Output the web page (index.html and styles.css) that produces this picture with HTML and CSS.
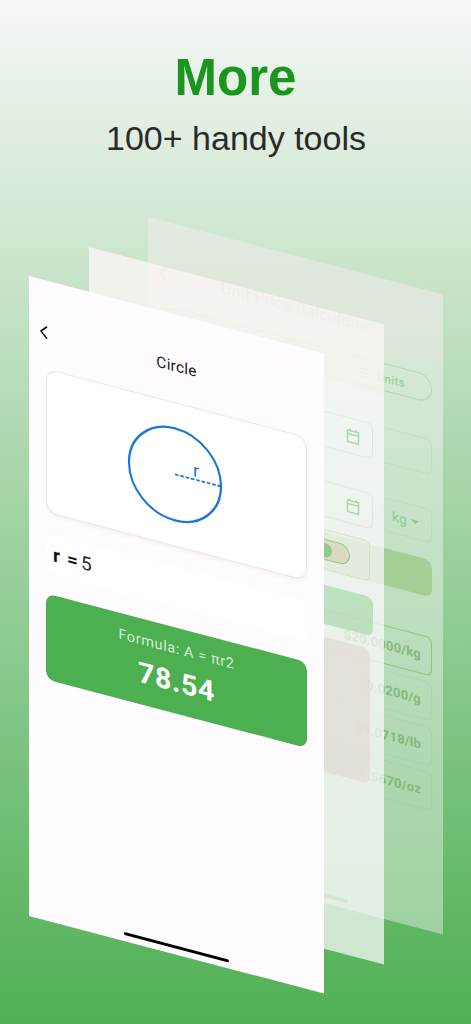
FILE: index.html
```html
<!DOCTYPE html>
<html lang="en">
<head>
<meta charset="utf-8">
<title>More - 100+ handy tools</title>
<link rel="stylesheet" href="styles.css">
</head>
<body>
<header class="hero">
  <h1 class="hero-title">More</h1>
  <p class="hero-sub">100+ handy tools</p>
</header>

<section class="sheet sheet-back">
  <div class="bar bar-tint bar-tint-back">
    <svg class="chev" viewBox="0 0 10 14"><path d="M8 1 2 7l6 6"/></svg>
    <span class="bar-title">Unit Price Calculator</span>
  </div>
  <div class="back-body">
    <div class="seg">
      <div class="seg-item seg-on"></div>
      <div class="seg-item"></div>
      <div class="seg-item seg-units">
        <svg class="list-ic" viewBox="0 0 12 12"><path d="M1 2h1M4 2h7M1 6h1M4 6h7M1 10h1M4 10h7"/></svg>
        <span class="units-label">Units</span>
      </div>
    </div>
    <div class="back-line back-line-a"><div class="b-field b-field-a"></div></div>
    <div class="back-line back-line-b"><div class="b-field b-field-b"><span class="kg">kg</span><span class="caret"></span></div></div>
    <div class="back-btn"></div>
    <ul class="results">
      <li class="res res-on">$20.0000/kg</li>
      <li class="res">$0.0200/g</li>
      <li class="res">$9.0718/lb</li>
      <li class="res">$0.5670/oz</li>
    </ul>
  </div>
  <div class="home home-back"></div>
</section>

<section class="sheet sheet-mid">
  <div class="bar bar-tint">
    <svg class="chev chev-mid" viewBox="0 0 10 14"><path d="M8 1 2 7l6 6"/></svg>
  </div>
  <div class="mid-body">
    <div class="m-field m-field-a">
      <svg class="cal" viewBox="0 0 14 16"><path d="M1.5 3h11v11.5h-11zM1.5 6.5h11M4 1v3M10 1v3"/></svg>
    </div>
    <div class="m-field m-field-b">
      <svg class="cal" viewBox="0 0 14 16"><path d="M1.5 3h11v11.5h-11zM1.5 6.5h11M4 1v3M10 1v3"/></svg>
    </div>
    <div class="m-toggle"><span class="pill"><span class="knob"></span></span></div>
    <div class="m-green"></div>
    <div class="m-tan"></div>
  </div>
</section>

<section class="sheet sheet-front">
  <div class="bar">
    <svg class="chev chev-front" viewBox="0 0 10 14"><path d="M8 1 2 7l6 6"/></svg>
    <span class="bar-title bar-title-front">Circle</span>
  </div>
  <div class="shape-card">
    <svg class="circle" viewBox="0 0 96 96">
      <circle cx="48" cy="48" r="46"/>
      <path class="radius" d="M48 48h46"/>
      <text class="r-label" x="66" y="45">r</text>
    </svg>
  </div>
  <div class="input-card">
    <span class="var">r</span><span class="eq">=</span><span class="val">5</span>
  </div>
  <div class="result-card">
    <div class="formula">Formula: A = πr2</div>
    <div class="answer">78.54</div>
  </div>
  <div class="home"></div>
</section>
</body>
</html>
```
FILE: styles.css
```css
* { box-sizing: border-box; margin: 0; padding: 0; }
html, body { height: 1024px; }
body {
  position: relative;
  width: 471px;
  overflow: hidden;
  background: linear-gradient(180deg, #f5f7f5 0%, #4fb054 100%);
  font-family: Roboto, "Liberation Sans", sans-serif;
}
.hero { padding-top: 48px; text-align: center; font-family: "Liberation Sans", Arial, sans-serif; }
.hero-title { font-size: 51px; line-height: 60px; font-weight: 700; color: #1a961e; }
.hero-sub { margin-top: 10px; padding-left: 1px; font-size: 34px; line-height: 40px; color: #2a2a2a; }

.sheet {
  position: absolute;
  width: 295px;
  height: 640px;
  display: flex;
  flex-direction: column;
  transform-origin: 0 0;
  transform: skewY(14.72deg);
}
.sheet-back { left: 148px; top: 217px; background: rgba(255, 251, 255, .4); }
.sheet-mid { left: 89px; top: 246.5px; background: rgba(255, 251, 255, .7); }
.sheet-front { left: 29px; top: 276px; background: #fffbff; }

.bar { position: relative; height: 88px; flex: none; }
.bar-tint { height: 70px; background: rgba(244, 238, 232, .42); }
.bar-tint-back { background: rgba(226, 226, 218, .45); }
.chev { position: absolute; left: 10px; top: 45px; width: 10px; height: 14px; fill: none; stroke: rgba(170, 170, 160, .6); stroke-width: 1.6; }
.chev-front { stroke: #111; }
.chev-mid { stroke: #777; }
.bar-title { position: absolute; left: 0; right: 0; top: 41px; text-align: center; font-size: 16px; line-height: 22px; letter-spacing: .2px; color: rgba(150, 150, 140, .42); }
.bar-title-front { font-size: 15.5px; color: #222; }

/* back sheet */
.back-body { display: flex; flex-direction: column; padding: 14px 11px 0 15px; opacity: .75; }
.seg { display: flex; height: 28px; border: 1px solid rgba(76, 175, 80, .35); border-radius: 14px; overflow: hidden; }
.seg-item { flex: 1; min-width: 0; border-left: 1px solid rgba(76, 175, 80, .3); }
.seg-item:first-child { border-left: 0; }
.seg-on { background: rgba(240, 215, 205, .5); }
.seg-units { display: flex; align-items: center; padding: 2px 0 0 42px; gap: 8px; font-size: 11.5px; letter-spacing: .4px; color: #6fbf73; }
.list-ic { flex: none; width: 12px; height: 12px; fill: none; stroke: #7cc47f; stroke-width: 1; }
.back-line { display: flex; justify-content: flex-end; }
.back-line-a { margin-top: 36px; }
.back-line-b { margin-top: 34px; }
.b-field { border: 1px solid rgba(76, 175, 80, .13); border-radius: 6px; }
.b-field-a { width: 60px; height: 36px; }
.b-field-b { width: 49px; height: 34px; display: flex; align-items: center; gap: 4px; padding-left: 8px; font-size: 14px; color: #7cc47f; }
.caret { border: 4px solid transparent; border-top-color: #7cc47f; border-bottom-width: 0; }
.back-btn { margin-top: 17px; height: 37px; border-radius: 8px; background: #8cbd6c; opacity: .7; }
.results { list-style: none; margin-top: 40px; display: flex; flex-direction: column; gap: 6px; }
.res {
  height: 39px;
  padding-right: 10px;
  display: flex;
  align-items: center;
  justify-content: flex-end;
  border: 1px solid rgba(76, 175, 80, .12);
  border-radius: 6px;
  font-size: 13px;
  font-weight: 700;
  letter-spacing: .2px;
  color: #74ae68;
}
.res-on { border: 1.5px solid #88bb60; }

/* middle sheet */
.mid-body { display: flex; flex-direction: column; padding: 0 11px 0 15px; }
.m-field { height: 36px; border: 1px solid rgba(76, 175, 80, .12); border-radius: 6px; display: flex; align-items: center; justify-content: flex-end; padding-right: 12px; }
.m-field-a { margin-top: 32px; }
.m-field-b { margin-top: 34px; }
.cal { width: 14px; height: 16px; fill: none; stroke: #a9d8ab; stroke-width: 1.5; }
.m-toggle { margin: 12px 3px 0 0; height: 41px; border: 1px solid rgba(76, 175, 80, .15); border-radius: 6px; background: rgba(225, 235, 215, .4); display: flex; align-items: center; justify-content: flex-end; padding-right: 19px; }
.pill { width: 38px; height: 21px; border: 1.5px solid #8fca8c; border-radius: 11px; background: #dcd9c3; display: flex; align-items: center; padding-left: 5px; }
.knob { width: 14px; height: 14px; border-radius: 50%; background: #8ccb8c; }
.m-green { margin-top: 15px; height: 39px; border-radius: 7px; background: rgba(120, 195, 125, .4); }
.m-tan { margin: 13px 3px 0 0; height: 135px; border-radius: 7px; background: rgba(226, 218, 212, .72); }

/* front sheet */
.shape-card { margin: 0 17px; height: 144px; flex: none; padding-right: 3px; background: #fff; border: 1px solid #e9e7ea; border-radius: 12px; display: flex; align-items: center; justify-content: center; box-shadow: 0 2px 5px rgba(0, 0, 0, .05); }
.circle { width: 96px; height: 96px; }
.circle circle { fill: none; stroke: #1976d2; stroke-width: 2.2; }
.radius { stroke: #1976d2; stroke-width: 1.8; stroke-dasharray: 3.5 1.8; fill: none; }
.r-label { font-family: Roboto, "Liberation Sans", sans-serif; font-size: 18px; fill: #1976d2; }
.input-card { margin: 20px 17px 0; height: 41px; flex: none; padding-left: 7px; display: flex; align-items: center; background: #fff; border-radius: 10px; color: #111; }
.var { font-size: 19px; font-weight: 700; }
.eq { margin-left: 7px; font-size: 19px; font-weight: 700; }
.val { margin-left: 3px; font-size: 19px; font-weight: 400; color: #222; }
.result-card { margin: 20px 17px 0; height: 86px; flex: none; border-radius: 9px; background: #4caf50; text-align: center; color: #fff; padding-top: 13px; }
.formula { font-size: 14.5px; line-height: 18px; letter-spacing: .6px; color: #d5edd6; }
.answer { margin-top: 8px; font-size: 28.5px; line-height: 32px; font-weight: 700; letter-spacing: .7px; }
.home { width: 105px; height: 3.5px; flex: none; margin: auto 0 6px 95px; border-radius: 2px; background: #000; }
.home-back { height: 4px; background: #4caf50; opacity: .7; }
```
